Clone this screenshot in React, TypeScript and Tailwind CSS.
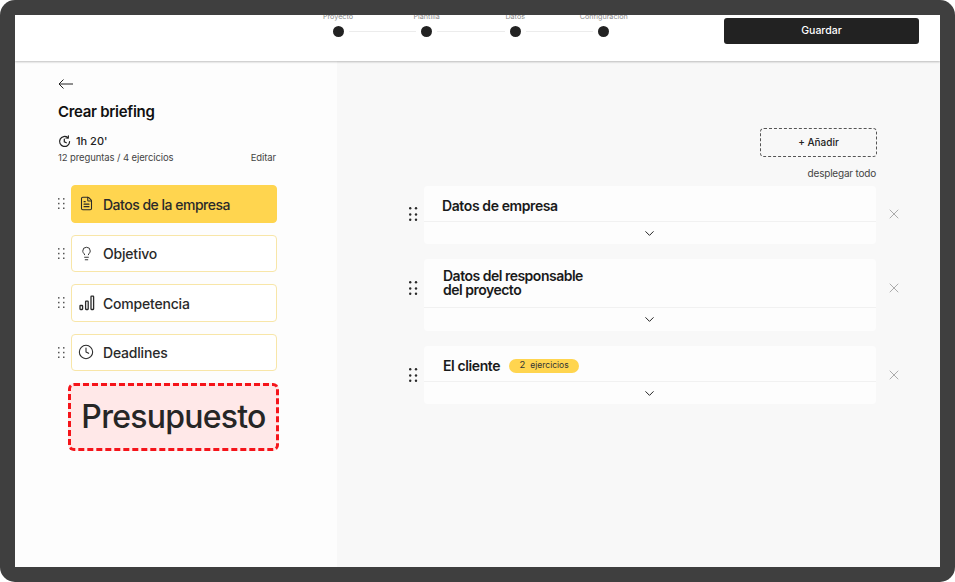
import { ChevronDown, Clock, FileText, Lightbulb, X } from 'lucide-react'
import { ReactNode } from 'react'

const fontClass = "font-['Inter',sans-serif]"

function DragDots({ large = false }: { large?: boolean }) {
  if (large) {
    return (
      <svg width="9" height="14" viewBox="0 0 9 14" className="text-[#2a2a2a]" fill="currentColor">
        {[1.2, 7].map((y) =>
          [1.2, 7.5, 12.8].map((x) => <circle key={`${x}-${y}`} cx={y} cy={x} r="1.2" />),
        )}
      </svg>
    )
  }
  return (
    <svg width="7" height="11" viewBox="0 0 7 11" className="text-[#555]" fill="currentColor">
      {[0.7, 5.7].map((x) =>
        [0.8, 5.5, 10.2].map((y) => <rect key={`${x}-${y}`} x={x - 0.7} y={y - 0.7} width="1.5" height="1.5" />),
      )}
    </svg>
  )
}

function BackArrow() {
  return (
    <svg width="16" height="10" viewBox="0 0 16 10" fill="none" stroke="#222" strokeWidth="1" className="my-[3px]">
      <path d="M15 5H1" />
      <path d="M5.5 0.5 1 5l4.5 4.5" />
    </svg>
  )
}

function BarsIcon() {
  return (
    <svg width="16" height="16" viewBox="0 0 16 16" fill="none" stroke="#2a2a2a" strokeWidth="1.3">
      <rect x="1" y="10.5" width="2.6" height="4" rx="0.5" />
      <rect x="6.6" y="6.2" width="2.6" height="8.3" rx="0.5" />
      <rect x="12" y="1.2" width="2.6" height="13.3" rx="0.5" />
    </svg>
  )
}

function TimerIcon() {
  return (
    <svg width="13" height="13" viewBox="0 0 13 13" fill="none" stroke="#222" strokeWidth="1.2" strokeLinecap="round">
      <path d="M11.6 6.5A5 5 0 1 1 9.9 2.7" />
      <path d="M10.4 0.9 10.2 3.2 7.9 3" />
      <path d="M6.3 4v2.8l2 1" />
    </svg>
  )
}

const steps = ['Proyecto', 'Plantilla', 'Datos', 'Configuración']

function Stepper() {
  return (
    <div className="flex items-center">
      {steps.map((label, i) => (
        <div key={label} className="flex items-center">
          <div className="relative h-[11px] w-[11px] rounded-full bg-[#222]">
            <span className="absolute -top-[14px] left-1/2 -translate-x-1/2 whitespace-nowrap text-[7.2px] leading-[10px] text-[#8a8a8a]">
              {label}
            </span>
          </div>
          {i < steps.length - 1 && <div className="mx-[5px] h-px w-[67.6px] bg-[#ececec]" />}
        </div>
      ))}
    </div>
  )
}

interface SectionItemProps {
  icon: ReactNode
  label: string
  active?: boolean
}

function SectionItem({ icon, label, active = false }: SectionItemProps) {
  return (
    <div className="flex items-center gap-[6px]">
      <DragDots />
      <div
        className={`flex h-[37.5px] w-[206px] items-center rounded-[4px] border ${
          active ? 'border-[#ffd54f] bg-[#ffd54f]' : 'border-[#f8e6a8] bg-white'
        }`}
      >
        <div className="flex w-[31px] justify-start pl-[7px]">{icon}</div>
        <span
          className={`pt-px text-[14px] font-medium text-[#2a2a2a] ${
            active ? 'tracking-[-0.5px]' : 'tracking-[-0.2px]'
          }`}
        >
          {label}
        </span>
      </div>
    </div>
  )
}

interface BlockProps {
  children: ReactNode
  topClass: string
  bottomHeight: string
  gripClass?: string
}

function Block({ children, topClass, bottomHeight, gripClass = '' }: BlockProps) {
  return (
    <div className="flex items-center">
      <div className={`flex w-[30px] justify-start pl-[15px] ${gripClass}`}>
        <DragDots large />
      </div>
      <div className="w-[452px] rounded-[4px] bg-[#fdfdfd]">
        <div className={`flex items-center border-b border-[#f1f1f1] pl-[18px] ${topClass}`}>{children}</div>
        <div className={`flex items-center justify-center ${bottomHeight}`}>
          <ChevronDown size={15} strokeWidth={1.6} className="-ml-px text-[#222]" />
        </div>
      </div>
      <div className={`flex w-[26px] justify-end ${gripClass}`}>
        <X size={16} strokeWidth={1.1} className="text-[#8f8f8f]" />
      </div>
    </div>
  )
}

export default function App() {
  return (
    <div className={`h-[582px] w-[955px] overflow-hidden bg-white ${fontClass}`}>
      <div className="h-full w-full rounded-[15px] bg-[#3f3f3f] p-[15px]">
        <div className="flex h-full w-full flex-col overflow-hidden bg-[#f8f8f8]">
          <header className="relative z-10 flex h-[46px] shrink-0 items-center bg-white pl-[317.5px] pr-[21px] shadow-[0_1px_2px_rgba(0,0,0,0.25)]">
            <div className="-mt-[14px]">
              <Stepper />
            </div>
            <button className="-mt-[14px] ml-auto h-[26px] w-[195px] rounded-[3px] bg-[#222] text-[10.5px] font-medium text-white">
              Guardar
            </button>
          </header>

          <div className="flex min-h-0 flex-1">
            <aside className="flex w-[322px] shrink-0 flex-col bg-[#fdfdfd] pl-[43px] pr-[60px] pt-[15px]">
              <BackArrow />
              <h1 className="mt-[10px] text-[15px] font-semibold leading-[20px] tracking-[-0.3px] text-[#111]">
                Crear briefing
              </h1>
              <div className="mt-[11px] flex items-center gap-[5px] text-[11px] font-medium leading-[16px] text-[#222]">
                <TimerIcon />
                <span>1h 20'</span>
              </div>
              <div className="mt-[2px] flex items-center justify-between text-[9.5px] leading-[14px] tracking-[-0.1px] text-[#444]">
                <span>12 preguntas / 4 ejercicios</span>
                <span className="mr-[1px]">Editar</span>
              </div>

              <div className="mt-[20px] flex w-[219px] flex-col gap-[12px]">
                <SectionItem active icon={<FileText size={15} strokeWidth={1.7} className="text-[#2a2a2a]" />} label="Datos de la empresa" />
                <SectionItem icon={<Lightbulb size={15} strokeWidth={1.5} className="text-[#2a2a2a]" />} label="Objetivo" />
                <SectionItem icon={<BarsIcon />} label="Competencia" />
                <SectionItem icon={<Clock size={16} strokeWidth={1.6} className="-ml-px text-[#2a2a2a]" />} label="Deadlines" />
              </div>

              <div className="-mr-[2px] ml-[10px] mt-[12px] flex h-[68px] items-center justify-center rounded-[6px] border-[3px] border-dashed border-[#f5141a] bg-[#ffe8e8] text-[32px] font-[550] tracking-[-0.75px] text-[#262626]">
                Presupuesto
              </div>
            </aside>

            <main className="flex flex-1 flex-col pl-[57px] pt-[67px]">
              <div className="flex w-[482px] flex-col items-end">
                <button className="-mr-px h-[29px] w-[117px] rounded-[4px] border border-dashed border-[#555] text-[10px] font-medium text-[#222]">
                  + Añadir
                </button>
                <span className="mt-[9px] text-[10px] leading-[14px] tracking-[-0.2px] text-[#444]">desplegar todo</span>
              </div>

              <div className="mt-[6px] flex flex-col gap-[15px]">
                <Block topClass="h-[36px] pt-[4px]" bottomHeight="h-[22px]" gripClass="mb-[2px]">
                  <span className="text-[14px] font-semibold tracking-[-0.4px] text-[#1a1a1a]">Datos de empresa</span>
                </Block>
                <Block topClass="h-[49px]" bottomHeight="h-[23px]" gripClass="mb-[14px]">
                  <span className="-mt-px pl-px text-[14px] font-semibold leading-[13.5px] tracking-[-0.5px] text-[#1a1a1a]">
                    Datos del responsable
                    <br />
                    del proyecto
                  </span>
                </Block>
                <Block topClass="h-[36px] pt-[4px]" bottomHeight="h-[22px]">
                  <span className="pl-px text-[14px] font-semibold tracking-[-0.4px] text-[#1a1a1a]">El cliente</span>
                  <span className="ml-[9px] flex h-[14px] w-[70px] items-center justify-center gap-[5px] rounded-full bg-[#ffd54f] text-[8.5px] text-[#333]">
                    <span className="text-[9.5px]">2</span>
                    <span>ejercicios</span>
                  </span>
                </Block>
              </div>
            </main>
          </div>
        </div>
      </div>
    </div>
  )
}
